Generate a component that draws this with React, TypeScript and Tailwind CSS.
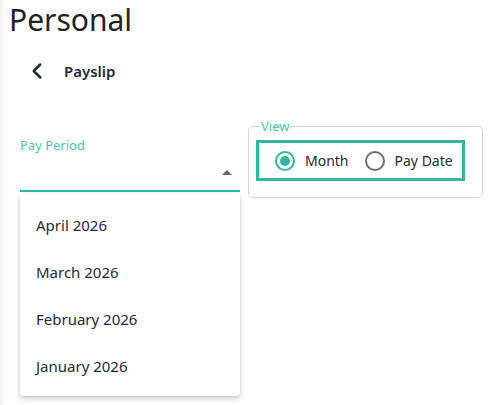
import { ChevronLeft } from "lucide-react";

const months = ["April 2026", "March 2026", "February 2026", "January 2026"];

function Radio({ checked, label }: { checked?: boolean; label: string }) {
  return (
    <label className="flex items-center gap-[10px]">
      <span
        className={
          checked
            ? "flex h-[20px] w-[20px] items-center justify-center rounded-full border-2 border-[#34b5a0]"
            : "flex h-[20px] w-[20px] items-center justify-center rounded-full border-2 border-[#6f6f6f]"
        }
      >
        {checked && <span className="h-[10px] w-[10px] rounded-full bg-[#34b5a0]" />}
      </span>
      <span className="text-[14px] text-[#1f2a3a]">{label}</span>
    </label>
  );
}

export default function App() {
  return (
    <div className="h-[405px] w-[493px] overflow-hidden bg-white font-['Noto_Sans',sans-serif] shadow-[inset_5px_0_4px_-3px_rgba(0,0,0,0.07)]">
      <h1 className="pl-[9px] pt-[2px] text-[30px] leading-[36px] text-[#222]">Personal</h1>

      <div className="mt-[20px] flex items-center pl-[24px]">
        <ChevronLeft className="h-[26px] w-[26px] text-[#1f2a3a]" strokeWidth={2.3} />
        <span className="ml-[14px] text-[15px] font-semibold text-[#1f2a3a]">Payslip</span>
      </div>

      <div className="mt-[37px] flex items-start gap-[8px] pl-[20px]">
        <div className="relative mt-[15px] w-[220px]">
          <div className="text-[13px] leading-[18px] text-[#4cc4b3]">Pay Period</div>
          <div className="flex h-[38px] items-center justify-end border-b-2 border-[#2db5a2] pr-[8px]">
            <span className="h-0 w-0 border-x-[5px] border-b-[5px] border-x-transparent border-b-[#6a625a]" />
          </div>
          <ul className="absolute left-0 top-[58px] w-[220px] rounded-b-[4px] bg-white pb-[6px] pt-[8px] shadow-[0_3px_6px_rgba(0,0,0,0.18),0_1px_3px_rgba(0,0,0,0.08)]">
            {months.map((m) => (
              <li key={m} className="flex h-[47px] items-center pl-[16px] text-[15px] text-[#1f2a3a]">
                {m}
              </li>
            ))}
          </ul>
        </div>

        <fieldset className="mt-[-2px] w-[235px] rounded-[5px] border border-[#d6d6d6] px-[7px] pb-[16px] pt-[7px]">
          <legend className="ml-[4px] px-[1px] text-[13px] leading-[14px] text-[#4cc4b3]">View</legend>
          <div className="flex h-[41px] w-[209px] items-center gap-[16px] border-[3px] border-[#34b5a0] pl-[16px]">
            <Radio checked label="Month" />
            <Radio label="Pay Date" />
          </div>
        </fieldset>
      </div>
    </div>
  );
}
